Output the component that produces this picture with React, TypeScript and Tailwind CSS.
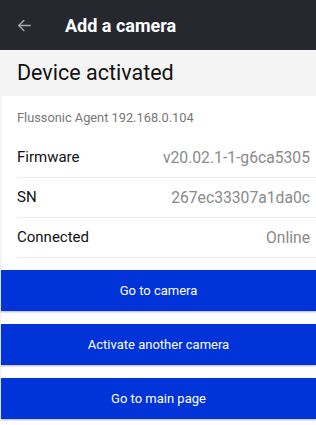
import React from 'react';

const rows = [
  { label: 'Firmware', value: 'v20.02.1-1-g6ca5305' },
  { label: 'SN', value: '267ec33307a1da0c' },
  { label: 'Connected', value: 'Online' },
];

const buttons = ['Go to camera', 'Activate another camera', 'Go to main page'];

export default function App() {
  return (
    <div className="w-[316px] h-[425px] overflow-hidden bg-white font-['Roboto',sans-serif]">
      <header className="h-[50px] bg-[#26282f] flex items-center">
        <svg className="ml-[16px] w-[17px] h-[17px] text-[#a3a6ad]" viewBox="0 0 24 24" fill="none" stroke="currentColor" strokeWidth="2.2" strokeLinecap="round" strokeLinejoin="round">
          <path d="M20 12H4" />
          <path d="M11 5l-7 7 7 7" />
        </svg>
        <h1 className="ml-[32px] text-[18px] font-bold text-white">Add a camera</h1>
      </header>

      <div className="shadow-[inset_2px_0_2px_-1px_rgba(0,0,0,0.08)]">
        <div className="h-[46px] bg-[#f4f4f4] flex items-center px-[17px]">
          <h2 className="text-[21.5px] text-[#111]">Device activated</h2>
        </div>

        <div className="h-[42px] flex items-center px-[17px] pt-[2px]">
          <span className="text-[12.8px] text-[#777]">Flussonic Agent 192.168.0.104</span>
        </div>

        <div className="pl-[17px]">
          {rows.map((r) => (
            <div key={r.label} className="h-[40px] flex items-center justify-between pr-[6px] border-b border-[#ececec]">
              <span className="text-[15px] text-[#111]">{r.label}</span>
              <span className="text-[15.7px] text-[#8a8a8a]">{r.value}</span>
            </div>
          ))}
        </div>

        <div className="flex flex-col gap-[13px] pt-[12px] pl-[1px]">
          {buttons.map((b) => (
            <button
              key={b}
              className="h-[41px] w-full bg-[#0033d8] text-white text-[13px] shadow-[0_1px_2px_rgba(0,0,0,0.3)]"
            >
              {b}
            </button>
          ))}
        </div>
      </div>
    </div>
  );
}
